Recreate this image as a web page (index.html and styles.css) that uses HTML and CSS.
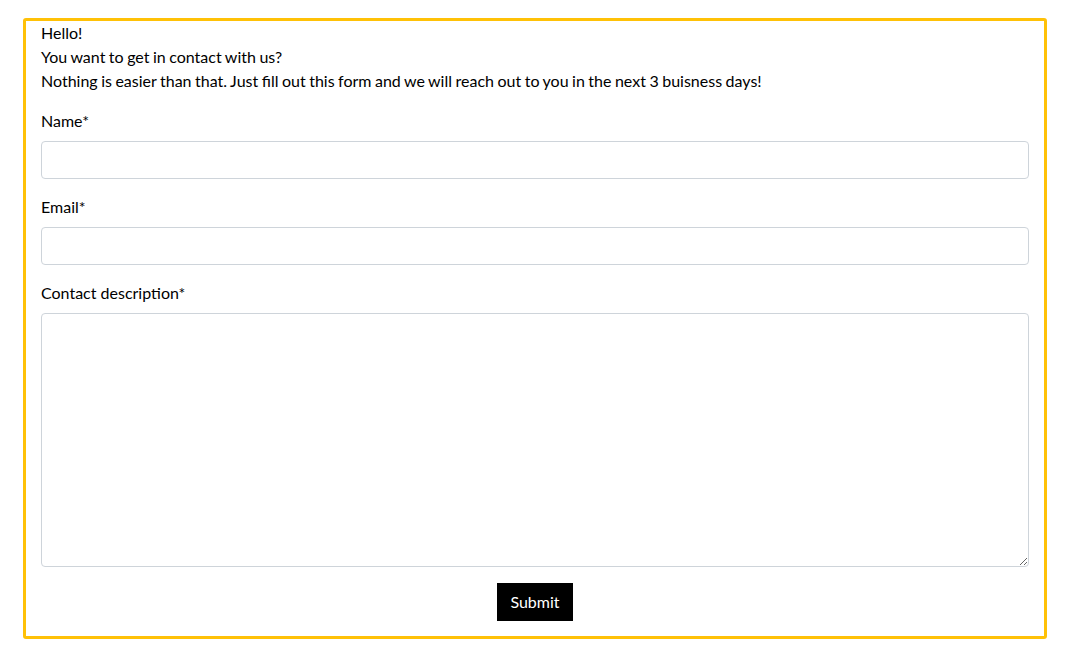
FILE: index.html
```html
<!DOCTYPE html>
<html>
<head>
<meta charset="utf-8">
<link rel="stylesheet" href="styles.css">
</head>
<body>
<div class="card">
  <p class="intro">Hello!<br>You want to get in contact with us?<br>Nothing is easier than that. Just fill out this form and we will reach out to you in the next 3 buisness days!</p>
  <form class="form">
    <div class="group">
      <label class="label">Name*</label>
      <input class="control" type="text">
    </div>
    <div class="group">
      <label class="label">Email*</label>
      <input class="control" type="email">
    </div>
    <div class="group">
      <label class="label">Contact description*</label>
      <textarea class="control area"></textarea>
    </div>
    <div class="actions">
      <button class="btn" type="button">Submit</button>
    </div>
  </form>
</div>
</body>
</html>
```
FILE: styles.css
```css
html, body {
  margin: 0;
  padding: 0;
  background: #fff;
}
body {
  font-family: Lato, "Open Sans", sans-serif;
  font-size: 16px;
  line-height: 24px;
  color: #000;
  padding: 18px 21px 0 23px;
}
.card {
  width: 988px;
  border: 3px solid #ffc107;
  border-radius: 3px;
  padding: 0 15px 15px 15px;
}
.intro {
  margin: 0 0 16px 0;
  word-spacing: -0.6px;
}
.form {
  margin: 0;
}
.group {
  margin-bottom: 16px;
  display: flex;
  flex-direction: column;
}
.label {
  display: block;
  margin-bottom: 8px;
}
.control {
  display: block;
  box-sizing: border-box;
  width: 100%;
  height: 38px;
  margin: 0;
  padding: 6px 12px;
  font-family: inherit;
  font-size: 16px;
  border: 1px solid #ced4da;
  border-radius: 4px;
  background: #fff;
}
.area {
  height: 254px;
  resize: vertical;
}
.actions {
  display: flex;
  justify-content: center;
}
.btn {
  background: #000;
  color: #fff;
  border: none;
  border-radius: 0;
  font-family: inherit;
  font-size: 16px;
  line-height: 24px;
  height: 38px;
  padding: 7px 13px;
  cursor: pointer;
}
```
